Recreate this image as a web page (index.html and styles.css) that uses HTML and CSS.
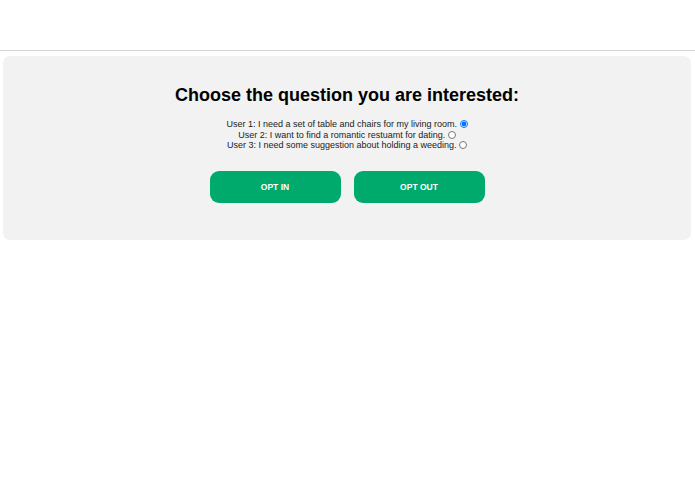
FILE: index.html
```html
<!DOCTYPE html>
<html lang="en">

<head>
  <meta charset="UTF-8">
  <meta name="viewport" content="width=device-width, initial-scale=1.0">
  <link rel="stylesheet" href="styles.css">
  <title>Choose a question</title>
</head>

<body>
  <header class="topbar"></header>
  <div class="panel">
    <h1>Choose the question you are interested:</h1>
    <form class="questions">
      <label>User 1: I need a set of table and chairs for my living room. <input type="radio" name="q" checked></label>
      <label>User 2: I want to find a romantic restuamt for dating. <input type="radio" name="q"></label>
      <label>User 3: I need some suggestion about holding a weeding. <input type="radio" name="q"></label>
    </form>
    <div class="buttons">
      <button class="btn">OPT IN</button>
      <button class="btn">OPT OUT</button>
    </div>
  </div>
</body>

</html>
```
FILE: styles.css
```css
body {
  margin: 0;
  padding: 0;
  font-family: "Liberation Sans", Arial, sans-serif;
  background: #fff;
}

.topbar {
  height: 50px;
  border-bottom: 1px solid #d4d4d4;
}

.panel {
  margin: 5px 4px 0 3px;
  padding: 29px 0 37px;
  background-color: #f2f2f2;
  border-radius: 7px;
  text-align: center;
}

.panel h1 {
  margin: 0;
  font-size: 18px;
  font-weight: bold;
  color: #000;
}

.questions {
  margin-top: 13px;
  display: flex;
  flex-direction: column;
  align-items: center;
}

.questions label {
  font-size: 9px;
  line-height: 10.5px;
  color: #222;
}

.questions input {
  width: 8px;
  height: 8px;
  margin: 0;
  vertical-align: -1px;
}

.buttons {
  margin-top: 20px;
  display: flex;
  justify-content: center;
  gap: 13px;
}

.btn {
  width: 131px;
  height: 32px;
  border: 0;
  border-radius: 9px;
  background-color: #00aa6c;
  color: #fff;
  font-family: "Liberation Sans", Arial, sans-serif;
  font-weight: bold;
  font-size: 8.5px;
}
```
